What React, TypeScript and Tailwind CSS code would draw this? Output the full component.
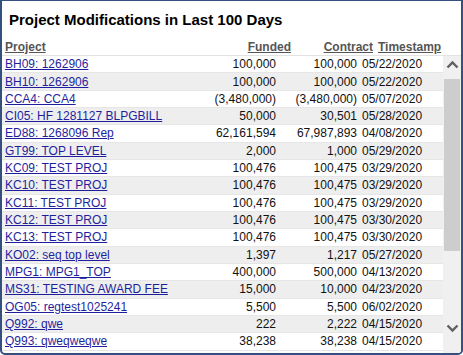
import React from "react";

const rows: [string, string, string, string][] = [
  ["BH09: 1262906", "100,000", "100,000", "05/22/2020"],
  ["BH10: 1262906", "100,000", "100,000", "05/22/2020"],
  ["CCA4: CCA4", "(3,480,000)", "(3,480,000)", "05/07/2020"],
  ["CI05: HF 1281127 BLPGBILL", "50,000", "30,501", "05/28/2020"],
  ["ED88: 1268096 Rep", "62,161,594", "67,987,893", "04/08/2020"],
  ["GT99: TOP LEVEL", "2,000", "1,000", "05/29/2020"],
  ["KC09: TEST PROJ", "100,476", "100,475", "03/29/2020"],
  ["KC10: TEST PROJ", "100,476", "100,475", "03/29/2020"],
  ["KC11: TEST PROJ", "100,476", "100,475", "03/29/2020"],
  ["KC12: TEST PROJ", "100,476", "100,475", "03/30/2020"],
  ["KC13: TEST PROJ", "100,476", "100,475", "03/30/2020"],
  ["KO02: seq top level", "1,397", "1,217", "05/27/2020"],
  ["MPG1: MPG1_TOP", "400,000", "500,000", "04/13/2020"],
  ["MS31: TESTING AWARD FEE", "15,000", "10,000", "04/23/2020"],
  ["OG05: regtest1025241", "5,500", "5,500", "06/02/2020"],
  ["Q992: qwe", "222", "2,222", "04/15/2020"],
  ["Q993: qweqweqwe", "38,238", "38,238", "04/15/2020"],
];

export default function App() {
  return (
    <div
      className="w-[463px] h-[355px] bg-white"
      style={{ fontFamily: '"Liberation Sans", Arial, sans-serif' }}
    >
      <div className="w-full h-full border-2 border-t border-[#34507e] rounded-b-[5px] flex flex-col overflow-hidden">
        <div className="mt-[10px] pl-[7px] text-[15px] leading-[17px] font-bold text-black">
          Project Modifications in Last 100 Days
        </div>
        <div className="mt-[11px] h-[16px] flex text-[12px] leading-[14px] font-bold text-[#555555] pt-[1px]">
          <div className="w-[217px] pl-[3px]">
            <span className="underline">Project</span>
          </div>
          <div className="w-[74px] pr-[2px] text-right">
            <span className="underline">Funded</span>
          </div>
          <div className="w-[82px] pr-[2px] text-right">
            <span className="underline">Contract</span>
          </div>
          <div className="flex-1 pl-[3px] whitespace-nowrap">
            <span className="underline">Timestamp</span>
          </div>
        </div>
        <div className="flex-1 flex min-h-0 border-t border-[#e2e2e2]">
          <div className="flex-1 overflow-hidden text-[12px]">
            {rows.map((r, i) => (
              <div
                key={i}
                className={`h-[17.33px] flex items-center border-b border-[#e6e6e6] ${
                  i % 2 === 1 ? "bg-[#eeeeee]" : "bg-white"
                }`}
              >
                <div className="w-[203px] pl-[3px] whitespace-nowrap">
                  <a href="#" className="underline text-[#1f1f9e]">
                    {r[0]}
                  </a>
                </div>
                <div className="w-[73px] pr-[2px] text-right text-[#111111]">{r[1]}</div>
                <div className="w-[81px] pr-[2px] text-right text-[#111111]">{r[2]}</div>
                <div className="flex-1 pl-[3px] text-[#111111]">{r[3]}</div>
              </div>
            ))}
          </div>
          <div className="w-[18px] bg-[#f0f0f0] flex flex-col items-center">
            <div className="h-[16px] w-full flex items-center justify-center">
              <svg width="13" height="9" viewBox="0 0 13 9">
                <path d="M1.5 7.5 L6.5 2.5 L11.5 7.5" fill="none" stroke="#606060" strokeWidth="2.4" />
              </svg>
            </div>
            <div className="h-[7px]" />
            <div className="w-[16px] h-[172px] bg-[#cdcdcd]" />
            <div className="flex-1" />
            <div className="h-[16px] w-full flex items-center justify-center mb-[17px]">
              <svg width="13" height="9" viewBox="0 0 13 9">
                <path d="M1.5 1.5 L6.5 6.5 L11.5 1.5" fill="none" stroke="#606060" strokeWidth="2.4" />
              </svg>
            </div>
          </div>
        </div>
      </div>
    </div>
  );
}
